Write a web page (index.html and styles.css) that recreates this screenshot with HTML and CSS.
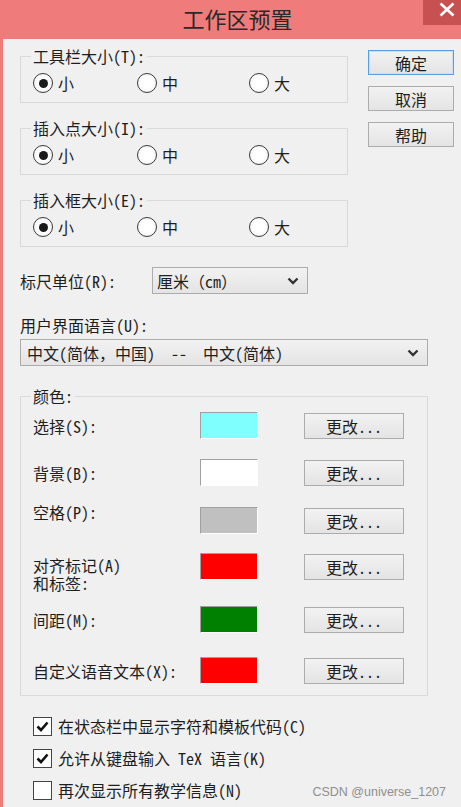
FILE: index.html
```html
<!DOCTYPE html>
<html lang="zh-CN">
<head>
<meta charset="utf-8">
<title>工作区预置</title>
<link rel="stylesheet" href="styles.css">
</head>
<body>
<div class="window">
  <div class="titlebar">
    <div class="title">工作区预置</div>
    <div class="close"><svg width="38" height="25" viewBox="0 0 38 25"><path d="M17.5 3.5 L30.5 15.5 M30.5 3.5 L17.5 15.5" stroke="#fff" stroke-width="2.6" fill="none"/></svg></div>
  </div>
  <div class="client">
    <div class="top">
      <div class="groups">
        <fieldset class="group">
          <legend>工具栏大小(T):</legend>
          <div class="radios">
            <div class="opt"><span class="radio on"></span>小</div>
            <div class="opt"><span class="radio"></span>中</div>
            <div class="opt"><span class="radio"></span>大</div>
          </div>
        </fieldset>
        <fieldset class="group">
          <legend>插入点大小(I):</legend>
          <div class="radios">
            <div class="opt"><span class="radio on"></span>小</div>
            <div class="opt"><span class="radio"></span>中</div>
            <div class="opt"><span class="radio"></span>大</div>
          </div>
        </fieldset>
        <fieldset class="group">
          <legend>插入框大小(E):</legend>
          <div class="radios">
            <div class="opt"><span class="radio on"></span>小</div>
            <div class="opt"><span class="radio"></span>中</div>
            <div class="opt"><span class="radio"></span>大</div>
          </div>
        </fieldset>
      </div>
      <div class="buttons">
        <div class="btn default">确定</div>
        <div class="btn">取消</div>
        <div class="btn">帮助</div>
      </div>
    </div>
    <div class="ruler">
      <span class="ruler-label">标尺单位(R):</span>
      <div class="select small"><span>厘米（cm）</span><svg width="12" height="8" viewBox="0 0 12 8"><path d="M1.5 1.5 L6 6 L10.5 1.5" stroke="#333" stroke-width="2.4" fill="none"/></svg></div>
    </div>
    <div class="lang-label">用户界面语言(U):</div>
    <div class="select wide"><span class="pre">中文(简体，中国)  --  中文(简体)</span><svg width="12" height="8" viewBox="0 0 12 8"><path d="M1.5 1.5 L6 6 L10.5 1.5" stroke="#333" stroke-width="2.4" fill="none"/></svg></div>
    <fieldset class="colors">
      <legend>颜色:</legend>
      <div class="crow r1"><span class="clabel">选择(S):</span><span class="swatch" style="background:#80ffff"></span><div class="btn change">更改...</div></div>
      <div class="crow r2"><span class="clabel">背景(B):</span><span class="swatch" style="background:#ffffff"></span><div class="btn change">更改...</div></div>
      <div class="crow r3"><span class="clabel up">空格(P):</span><span class="swatch" style="background:#c0c0c0"></span><div class="btn change">更改...</div></div>
      <div class="crow r4"><span class="clabel two"><span class="ln">对齐标记(A)</span><span class="ln">和标签:</span></span><span class="swatch" style="background:#ff0000"></span><div class="btn change">更改...</div></div>
      <div class="crow r5"><span class="clabel">间距(M):</span><span class="swatch" style="background:#008000"></span><div class="btn change">更改...</div></div>
      <div class="crow r6"><span class="clabel">自定义语音文本(X):</span><span class="swatch" style="background:#ff0000"></span><div class="btn change">更改...</div></div>
    </fieldset>
    <div class="checks">
      <div class="check"><span class="box"><svg width="15" height="15" viewBox="0 0 15 15"><path d="M2.5 7.5 L6 11 L12.5 3.5" stroke="#111" stroke-width="2.6" fill="none"/></svg></span>在状态栏中显示字符和模板代码(C)</div>
      <div class="check"><span class="box"><svg width="15" height="15" viewBox="0 0 15 15"><path d="M2.5 7.5 L6 11 L12.5 3.5" stroke="#111" stroke-width="2.6" fill="none"/></svg></span>允许从键盘输入 TeX 语言(K)</div>
      <div class="check"><span class="box"></span>再次显示所有教学信息(N)</div>
    </div>
  </div>
  <div class="watermark">CSDN @universe_1207</div>
</div>
</body>
</html>
```
FILE: styles.css
```css
html, body {
  margin: 0;
  padding: 0;
}
body {
  width: 461px;
  height: 807px;
  overflow: hidden;
  font-family: "Noto Sans Mono CJK SC", "Noto Sans CJK SC", monospace;
  font-size: 16px;
  color: #1e1e1e;
}
.window {
  position: relative;
  width: 461px;
  height: 807px;
  background: #f07b7b;
  padding-left: 3px;
  box-sizing: border-box;
  display: flex;
  flex-direction: column;
}
.titlebar {
  height: 39px;
  display: flex;
  margin-left: -3px;
}
.title {
  flex: 1;
  text-align: center;
  padding-left: 52px;
  font-family: "Noto Sans CJK SC", sans-serif;
  font-size: 22px;
  line-height: 37px;
  color: #2a2a2a;
}
.close {
  width: 38px;
  height: 25px;
  background: #c75050;
}
.close svg { display: block; }
.client {
  flex: 1;
  background: #f0f0f0;
  padding: 9px 0 0 17px;
  box-sizing: border-box;
}
.top {
  display: flex;
  gap: 20px;
}
.groups {
  width: 328px;
  display: flex;
  flex-direction: column;
  gap: 17px;
}
fieldset {
  margin: 0;
  border: 1px solid #d9d9d9;
  min-width: 0;
}
legend {
  padding: 0 2px;
  margin-left: -2px;
  line-height: 17px;
  font-size: 16px;
}
.group {
  padding: 8px 0 9px 12px;
}
.radios {
  display: grid;
  grid-template-columns: 104px 112px auto;
  height: 20px;
}
.opt {
  display: flex;
  align-items: center;
  gap: 5px;
  line-height: 20px;
}
.radio {
  width: 20px;
  height: 20px;
  box-sizing: border-box;
  border-radius: 50%;
  border: 1.5px solid #3a3a3a;
  background: radial-gradient(circle, #ffffff 40%, #ececec 100%);
  display: grid;
  place-items: center;
}
.radio.on::after {
  content: "";
  width: 9px;
  height: 9px;
  border-radius: 50%;
  background: #1a1a1a;
}
.buttons {
  margin-top: 2px;
  display: flex;
  flex-direction: column;
  gap: 11px;
}
.btn {
  box-sizing: border-box;
  border: 1px solid #acacac;
  background: linear-gradient(#f2f2f2, #e4e4e4);
  display: flex;
  align-items: center;
  justify-content: center;
  line-height: 18px;
}
.buttons .btn {
  width: 86px;
  height: 25px;
}
.btn.default {
  border-color: #5a9fe6;
  box-shadow: inset 0 0 0 1px #c7e0fa;
}
.ruler {
  margin-top: 20px;
  display: flex;
  align-items: center;
  height: 27px;
}
.ruler-label {
  width: 132px;
}
.select {
  box-sizing: border-box;
  height: 27px;
  border: 1px solid #acacac;
  background: linear-gradient(#f2f2f2, #e4e4e4);
  display: flex;
  align-items: center;
  justify-content: space-between;
  padding: 0 8px 0 4px;
}
.select svg { display: block; }
.select.small { width: 156px; }
.select.wide {
  width: 408px;
  padding-left: 6px;
}
.pre { white-space: pre; }
.lang-label {
  margin: 22px 0 5px 0;
  line-height: 18px;
}
.colors {
  margin: 22px 0 0 0;
  width: 408px;
  box-sizing: border-box;
  padding: 7px 0 11px 12px;
}
.crow {
  display: flex;
  align-items: center;
  height: 27px;
}
.r2 { margin-top: 20px; }
.r3 { margin-top: 21px; }
.r4 { margin-top: 19px; }
.r5 { margin-top: 26px; }
.r6 { margin-top: 24px; }
.clabel {
  width: 167px;
  flex: none;
  line-height: 18px;
}
.clabel.up { align-self: flex-start; margin-top: -4px; }
.clabel.two {
  align-self: flex-start;
  margin-top: 3px;
  display: flex;
  flex-direction: column;
}
.ln { display: block; height: 18px; line-height: 18px; }
.swatch {
  flex: none;
  box-sizing: border-box;
  width: 58px;
  height: 27px;
  border: 1px solid;
  border-color: #a0a0a0 #ffffff #ffffff #a0a0a0;
}
.btn.change {
  flex: none;
  margin-left: 46px;
  width: 100px;
  height: 26px;
}
.checks {
  margin: 14px 0 0 13px;
  display: flex;
  flex-direction: column;
}
.check {
  height: 32px;
  display: flex;
  align-items: center;
  gap: 6px;
}
.box {
  width: 19px;
  height: 19px;
  box-sizing: border-box;
  border: 1.5px solid #444;
  background: #fff;
  display: grid;
  place-items: center;
}
.box svg { display: block; }
.watermark {
  position: absolute;
  right: 15px;
  top: 784px;
  font-family: "Liberation Sans", Arial, sans-serif;
  font-size: 12.5px;
  color: #8f8f8f;
  line-height: 16px;
}
```
